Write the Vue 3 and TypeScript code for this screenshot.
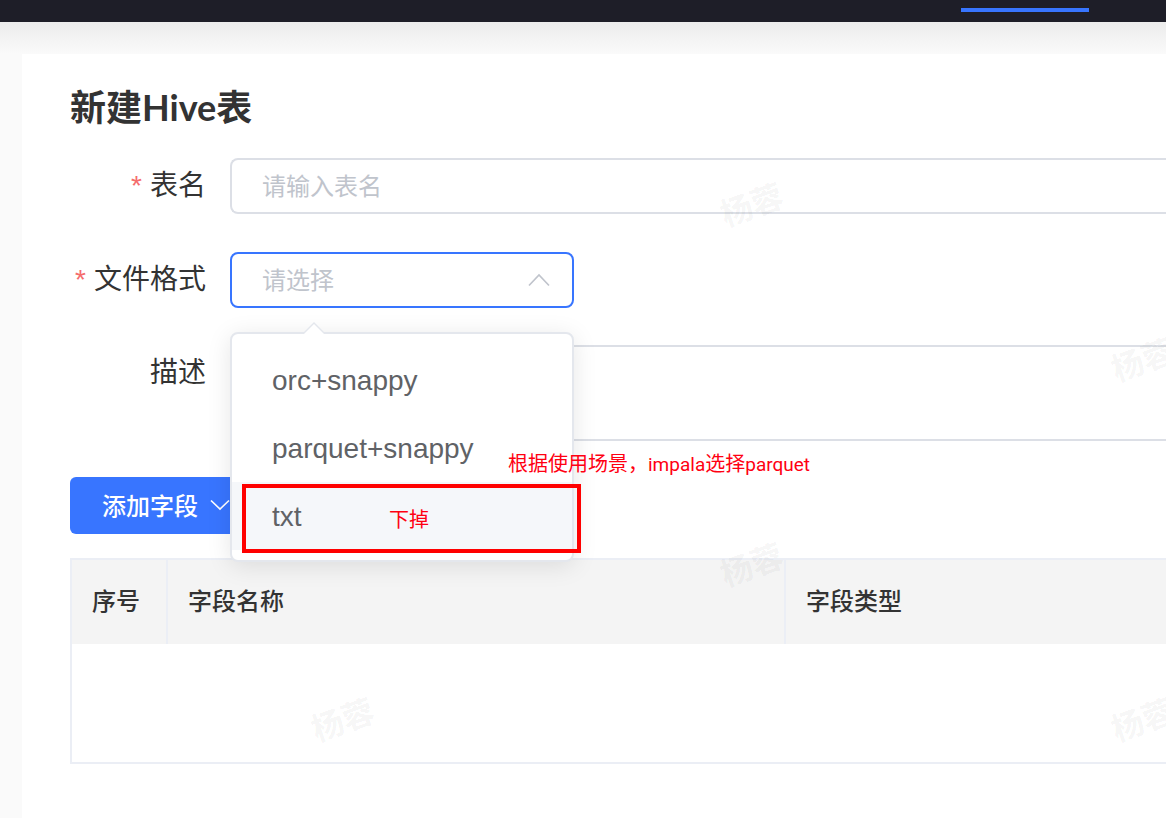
<script setup lang="ts">
import { ref } from 'vue'

const tableName = ref('')
const format = ref('')
const description = ref('')

const formats: string[] = ['orc+snappy', 'parquet+snappy', 'txt']
const highlighted = 'txt'
const columns: string[] = ['序号', '字段名称', '字段类型']

interface Mark {
  x: number
  y: number
}

const marks: Mark[] = [
  { x: 751, y: 203 },
  { x: 1142, y: 358 },
  { x: 751, y: 563 },
  { x: 342, y: 718 },
  { x: 1142, y: 718 },
]
</script>

<template>
  <div class="page">
    <header class="topbar"><span class="active-tab"></span></header>

    <main class="card">
      <h1>新建<span class="title-latin">Hive</span>表</h1>

      <form @submit.prevent>
        <div class="row">
          <label for="table-name"><span class="star">*</span>表名</label>
          <input id="table-name" v-model="tableName" class="field" type="text" placeholder="请输入表名" />
        </div>

        <div class="row">
          <label for="file-format"><span class="star">*</span>文件格式</label>
          <div class="picker">
            <select id="file-format" v-model="format" class="field">
              <option value="" disabled>请选择</option>
              <option v-for="f in formats" :key="f" :value="f">{{ f }}</option>
            </select>
            <svg class="caret" width="24" height="24" viewBox="0 0 24 24" fill="none">
              <path d="M2 17.500 12 7l10 10.500" stroke="#c0c4cc" stroke-width="1.700" />
            </svg>
            <div class="popup">
              <svg class="arrow" width="24" height="12" viewBox="0 0 24 12">
                <path d="M0 12 12 0l12 12z" fill="#e4e7ed" />
                <path d="M2 12 12 2l10 10z" fill="#fff" />
              </svg>
              <ul>
                <li v-for="f in formats" :key="f">
                  <button type="button" class="option" :class="{ on: f === highlighted }" @click="format = f">{{ f }}</button>
                </li>
              </ul>
            </div>
          </div>
        </div>

        <div class="row tall">
          <label for="description">描述</label>
          <textarea id="description" v-model="description" class="field"></textarea>
        </div>

        <button type="button" class="add">
          添加字段
          <svg width="20" height="20" viewBox="0 0 20 20" fill="none">
            <path d="M1 5.500 10 14l9-8.500" stroke="#fff" stroke-width="1.700" />
          </svg>
        </button>
      </form>

      <table>
        <colgroup><col class="c1" /><col class="c2" /><col /></colgroup>
        <thead>
          <tr><th v-for="c in columns" :key="c" scope="col">{{ c }}</th></tr>
        </thead>
        <tbody>
          <tr><td colspan="3"></td></tr>
        </tbody>
      </table>
    </main>

    <div class="marks" aria-hidden="true">
      <span v-for="(m, i) in marks" :key="i" class="mark" :style="{ left: m.x + 'px', top: m.y + 'px' }">杨蓉</span>
    </div>

    <p class="note note-format">根据使用场景，<span class="note-latin">impala</span>选择<span class="note-latin">parquet</span></p>
    <div class="frame"></div>
    <p class="note note-remove">下掉</p>
  </div>
</template>

<style>
body {
  margin: 0;
}
</style>

<style scoped>
.page {
  position: relative;
  box-sizing: border-box;
  min-height: 100vh;
  display: flex;
  flex-direction: column;
  overflow: hidden;
  background: linear-gradient(#ececec, #fafafa 32px) 0 22px no-repeat #fafafa;
  color: #333;
  font-family: "Liberation Sans", "Noto Sans CJK SC", sans-serif;
}
.topbar {
  position: relative;
  z-index: 2;
  box-sizing: border-box;
  height: 22px;
  padding: 8px 77px 0 0;
  display: flex;
  justify-content: flex-end;
  background: #1e1e28;
}
.active-tab {
  width: 128px;
  height: 4px;
  background: #3875ff;
}
.card {
  flex: 1;
  margin: 32px 0 0 22px;
  padding: 27px 0 54px 48px;
  background: #fff;
}
h1 {
  height: 48px;
  margin: 0 0 29px;
  font-size: 36px;
  line-height: 48px;
  font-weight: 700;
  font-family: "Noto Sans CJK SC", sans-serif;
}
.title-latin {
  font-family: Lato, sans-serif;
}
.row {
  display: flex;
  gap: 24px;
  margin-bottom: 38px;
}
.row.tall {
  margin: -1px 0 36px;
}
label {
  flex: 0 0 136px;
  display: flex;
  justify-content: flex-end;
  white-space: nowrap;
  font-size: 28px;
  line-height: 56px;
  height: 56px;
}
.star {
  margin-right: 8px;
  color: #f56c6c;
}
.field {
  box-sizing: border-box;
  display: block;
  height: 56px;
  margin: 0;
  padding: 0 30px 4px;
  border: 2px solid #dcdfe6;
  border-radius: 8px;
  background: #fff;
  outline: none;
  appearance: none;
  color: #c0c4cc;
  font: 24px "Noto Sans CJK SC", sans-serif;
}
.field::placeholder {
  color: #c0c4cc;
}
input.field,
textarea.field {
  flex: 1;
  min-width: 0;
  border-right: 0;
  border-radius: 8px 0 0 8px;
}
textarea.field {
  height: 96px;
  resize: none;
}
.picker {
  position: relative;
  width: 344px;
}
select.field {
  width: 100%;
  border-color: #3875ff;
}
.caret {
  position: absolute;
  right: 23px;
  top: 16px;
  pointer-events: none;
}
.popup {
  position: absolute;
  z-index: 3;
  left: 0;
  right: 0;
  top: 80px;
  border: 2px solid #e4e7ed;
  border-radius: 8px;
  background: #fff;
  box-shadow: 0 4px 24px rgba(0, 0, 0, 0.1);
}
.arrow {
  position: absolute;
  left: 70px;
  top: -12px;
}
ul {
  margin: 0;
  padding: 12px 0 10px;
  list-style: none;
}
.option {
  display: block;
  width: 100%;
  height: 68px;
  padding: 2px 40px 0;
  border: 0;
  background: none;
  color: #606266;
  text-align: left;
  font: 28px "Liberation Sans", sans-serif;
}
.option.on {
  background: #f5f7fa;
}
.add {
  display: flex;
  align-items: center;
  gap: 12px;
  height: 57px;
  padding: 0 32px 2px;
  border: 0;
  border-radius: 6px;
  background: #3875ff;
  color: #fff;
  font: 500 24px "Noto Sans CJK SC", sans-serif;
}
table {
  width: 100%;
  margin-top: 24px;
  table-layout: fixed;
  border: 2px solid #ebeef5;
  border-right: 0;
  border-spacing: 0;
}
.c1 {
  width: 96px;
}
.c2 {
  width: 618px;
}
th {
  box-sizing: border-box;
  height: 84px;
  padding: 0 20px 6px;
  border-right: 2px solid #ebeef5;
  background: #f4f4f4;
  text-align: left;
  font: 500 24px "Noto Sans CJK SC", sans-serif;
}
th:last-child {
  border-right: 0;
}
td {
  height: 118px;
  padding: 0;
}
.marks {
  position: absolute;
  inset: 0;
  z-index: 1;
  overflow: hidden;
  pointer-events: none;
}
.mark {
  position: absolute;
  color: rgba(0, 0, 0, 0.05);
  font: 700 32px/32px "Noto Sans CJK SC", sans-serif;
  white-space: nowrap;
  transform: translate(-50%, -50%) rotate(-20deg);
}
.note {
  position: absolute;
  z-index: 4;
  margin: 0;
  color: #ff0012;
  font-size: 20px;
  line-height: 28px;
  white-space: nowrap;
}
.note-latin {
  font-family: Roboto, sans-serif;
  font-size: 19px;
}
.note-format {
  left: 508px;
  top: 450px;
}
.note-remove {
  left: 389px;
  top: 506px;
}
.frame {
  position: absolute;
  z-index: 4;
  left: 242px;
  top: 484px;
  box-sizing: border-box;
  width: 339px;
  height: 69px;
  border: 4px solid #ff0000;
  pointer-events: none;
}
</style>
